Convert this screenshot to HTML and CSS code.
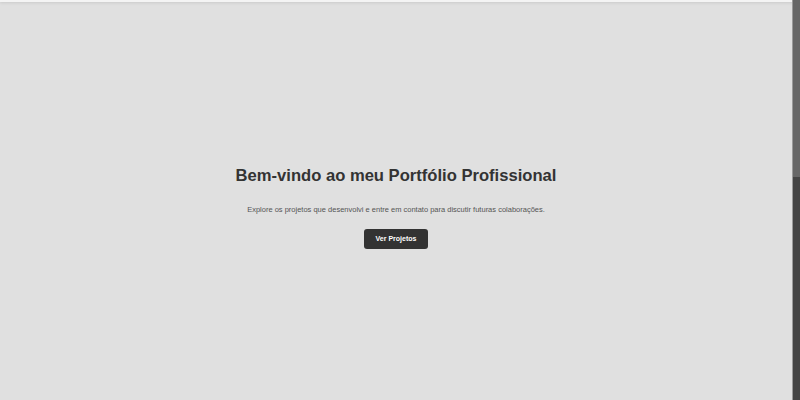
FILE: index.html
```html
<!DOCTYPE html>
<html lang="pt">
<head>
<meta charset="utf-8">
<title>Portfólio</title>
<link rel="stylesheet" href="styles.css">
</head>
<body>
<header class="topbar"></header>
<main class="hero">
  <h1 class="hero-title">Bem-vindo ao meu Portfólio Profissional</h1>
  <p class="hero-text">Explore os projetos que desenvolvi e entre em contato para discutir futuras colaborações.</p>
  <a class="hero-button" href="#">Ver Projetos</a>
</main>
<div class="scrollbar"><div class="scrollbar-thumb"></div></div>
</body>
</html>
```
FILE: styles.css
```css
html, body {
  margin: 0;
  padding: 0;
  height: 100%;
  overflow: hidden;
}
body {
  background: #e0e0e0;
  font-family: "Liberation Sans", Arial, sans-serif;
  color: #333;
}
.topbar {
  height: 2px;
  background: #f4f4f4;
  box-shadow: 0 1px 3px rgba(0,0,0,0.12);
}
.hero {
  height: calc(100% - 2px);
  display: flex;
  flex-direction: column;
  align-items: center;
  justify-content: center;
  text-align: center;
  padding: 12px 8px 0 0;
  box-sizing: border-box;
}
.hero-title {
  font-size: 16.6px;
  line-height: 19px;
  font-weight: bold;
  margin: 0 0 20px;
  color: #333;
}
.hero-text {
  font-size: 7.5px;
  line-height: 9px;
  color: #555;
  margin: 0 0 15px;
}
.hero-button {
  display: inline-block;
  background: #333;
  color: #fff;
  font-size: 7px;
  line-height: 8px;
  font-weight: bold;
  text-decoration: none;
  padding: 6px 12px;
  border-radius: 3px;
}
.scrollbar {
  position: fixed;
  top: 0;
  right: 0;
  width: 8px;
  height: 100%;
  background: #444;
  border-left: 1px solid #9a9a9a;
  box-sizing: border-box;
}
.scrollbar-thumb {
  height: 177px;
  background: #676767;
}
```
